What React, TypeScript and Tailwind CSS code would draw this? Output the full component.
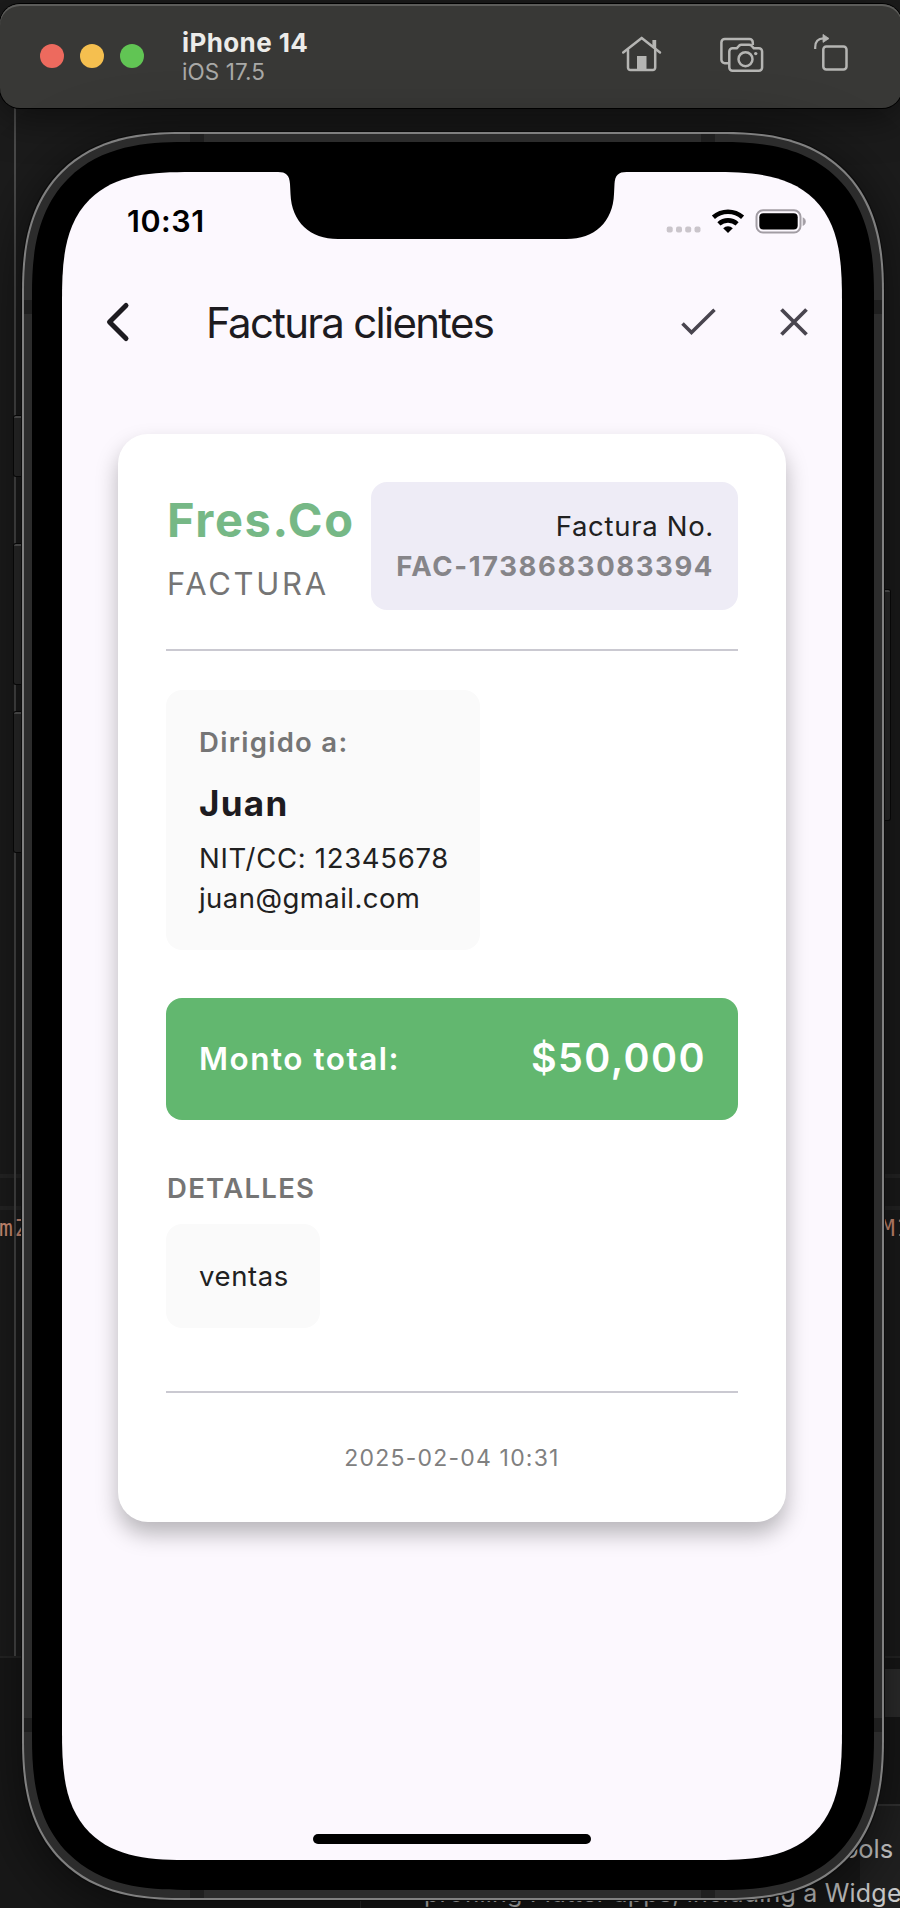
import type { ReactNode } from 'react';

function EditorBackdrop() {
  return (
    <div className="absolute inset-0 overflow-hidden bg-[#1c1c1c]" aria-hidden="true">
      <div className="absolute left-0 top-[1174px] h-1 w-full bg-[#262626]" />
      <div className="absolute left-0 top-[1206px] h-1 w-full bg-[#262626]" />
      <span className="absolute left-[-1px] top-[1212px] font-['DejaVu_Sans_Mono',monospace] text-[23px] leading-[32px] tracking-[1.8px] text-[#d8957a]">
        mZ
      </span>
      <span className="absolute left-[881px] top-[1212px] font-['DejaVu_Sans_Mono',monospace] text-[23px] leading-[32px] tracking-[1.4px] text-[#d8957a]">
        M1
      </span>
      <div className="absolute left-0 top-[1656px] h-[252px] w-full border-t-2 border-[#262626] bg-[#181818]" />
      <div className="absolute left-[870px] top-[1669px] h-12 w-[40px] bg-[#2e2e2e]" />
      <div className="absolute left-[860px] top-[1804px] h-[104px] w-[60px] border-t-2 border-[#333333] bg-[#202020]" />
      <div className="absolute left-[360px] top-[1890px] h-5 w-px bg-[#2c2c2c]" />
      <span className="absolute right-[7px] top-[1834px] text-[25.5px] leading-[30px] tracking-[-0.1px] text-[#cccccc]">
        tools
      </span>
      <span className="absolute left-[424px] top-[1878px] whitespace-nowrap text-[25px] leading-[30px] tracking-[0.2px] text-[#cccccc]">
        profiling Flutter apps, including a Widge
      </span>
    </div>
  );
}

function HomeIcon() {
  return (
    <svg width="42" height="44" viewBox="0 0 42 44" fill="none" stroke="#b5b5b3" strokeWidth="2.5" strokeLinecap="round" strokeLinejoin="round">
      <path d="M2.2 18.5 20.7 3.9 39 18.5" />
      <path d="M7 16v17.6a2.4 2.4 0 0 0 2.4 2.4h22.4a2.4 2.4 0 0 0 2.4-2.4V16" />
      <path d="M16 22h9.5v14H16z" fill="#b5b5b3" stroke="none" />
      <path d="M31.4 6h3.8v9l-3.8-3z" fill="#b5b5b3" stroke="none" />
    </svg>
  );
}

function ScreenshotIcon() {
  return (
    <svg width="46" height="44" viewBox="0 0 46 44" fill="none" stroke="#b5b5b3" strokeWidth="2.5" strokeLinejoin="round">
      <path d="M10 29.2H5.8A3.4 3.4 0 0 1 2.4 25.8V8.4A3.4 3.4 0 0 1 5.8 5H30.4a3.4 3.4 0 0 1 3.4 3.4V11" />
      <path d="M13.5 14.3h4.2l2.6-2.8q.8-.8 2-.8h8q1.200 0 2 .8l2.600 2.800h5a3.200 3.200 0 0 1 3.200 3.200v16a3.200 3.200 0 0 1-3.200 3.200H13.500a3.200 3.200 0 0 1-3.200-3.200v-16a3.200 3.200 0 0 1 3.200-3.200Z" />
      <circle cx="26.5" cy="25.2" r="7" />
      <circle cx="36.7" cy="19.6" r="1.7" fill="#b5b5b3" stroke="none" />
    </svg>
  );
}

function RotateIcon() {
  return (
    <svg width="38" height="44" viewBox="0 0 38 44" fill="none" stroke="#b5b5b3" strokeWidth="2.5">
      <rect x="11.3" y="12.5" width="23.2" height="23" rx="3" />
      <path d="M3.2 15v-1.8C3.2 7.5 6.2 4.6 11.5 4.4" strokeWidth="2.2" />
      <path d="M11 .4 17 4.500 11 8.400z" fill="#b5b5b3" strokeWidth="0.8" strokeLinejoin="round" />
    </svg>
  );
}

function TitleBar() {
  return (
    <header className="relative mt-1 flex h-[104px] w-[902px] shrink-0 items-center rounded-[20px] bg-[#383836] pl-10 pr-[52px] shadow-[0_0_0_1px_#000,inset_0_2px_0_#5c5c5a,0_8px_40px_rgba(0,0,0,0.5)]">
      <div className="flex gap-4">
        <span className="size-6 rounded-full bg-[#ed6a5e]" />
        <span className="size-6 rounded-full bg-[#f5bf4f]" />
        <span className="size-6 rounded-full bg-[#61c554]" />
      </div>
      <div className="ml-[38px] flex grow flex-col pt-[2px]">
        <span className="text-[26px] font-bold leading-[29px] tracking-[0.4px] text-[#ececea]">iPhone 14</span>
        <span className="text-[22.5px] leading-[29px] tracking-[0.1px] text-[#a9a9a7]">iOS 17.5</span>
      </div>
      <HomeIcon />
      <div className="ml-14">
        <ScreenshotIcon />
      </div>
      <div className="ml-[47px]">
        <RotateIcon />
      </div>
    </header>
  );
}

function SideButton({ className }: { className: string }) {
  return (
    <div
      className={`absolute border-t-2 border-t-[#5a5a5a] bg-[#2c2c2c] shadow-[0_0_0_1px_#0a0a0a] ${className}`}
    />
  );
}

function AntennaBands() {
  return (
    <>
      <div className="absolute left-[166px] top-0 h-2 w-3.5 bg-[#1f1f1f]" />
      <div className="absolute left-[677px] top-0 h-2 w-3.5 bg-[#1f1f1f]" />
      <div className="absolute bottom-0 left-[166px] h-2 w-3.5 bg-[#1f1f1f]" />
      <div className="absolute bottom-0 left-[677px] h-2 w-3.5 bg-[#1f1f1f]" />
      <div className="absolute left-0 top-[166px] h-3.5 w-2 bg-[#1f1f1f]" />
      <div className="absolute right-0 top-[166px] h-3.5 w-2 bg-[#1f1f1f]" />
      <div className="absolute bottom-[166px] left-0 h-3.5 w-2 bg-[#1f1f1f]" />
      <div className="absolute bottom-[166px] right-0 h-3.5 w-2 bg-[#1f1f1f]" />
    </>
  );
}

function Notch() {
  return (
    <svg className="absolute left-[216px] top-[-1px]" width="349" height="68" viewBox="0 -1 349 68" fill="#000">
      <path d="M0-1V0C8 0 11.5 3 12 12L12.500 22C13.500 50 32 67 60 67H288.500C316.500 67 335 50 336 22L336.500 12C337 3 340.500 0 348.500 0V-1Z" />
    </svg>
  );
}

function StatusBar() {
  return (
    <div className="flex h-[99px] items-center pl-[65px] pr-[35px]">
      <span className="grow text-[30.5px] font-semibold leading-none tracking-[0.5px] text-black">10:31</span>
      <svg width="36" height="26" viewBox="0 0 36 26" fill="#cac5cb">
        <rect x="0.7" y="17.5" width="6" height="6" rx="2" />
        <rect x="10" y="17.5" width="6" height="6" rx="2" />
        <rect x="19.2" y="17.5" width="6" height="6" rx="2" />
        <rect x="28.5" y="17.5" width="6" height="6" rx="2" />
      </svg>
      <svg className="ml-[9px]" width="34" height="26" viewBox="0 0 34 26" fill="none" stroke="#000" strokeWidth="4.6">
        <path d="M2.4 8.3A22 22 0 0 1 31.600 8.300" />
        <path d="M7.9 14.9A13.6 13.6 0 0 1 26.100 14.900" />
        <path d="M17 23.900 12.200 19.200A7 7 0 0 1 21.800 19.200Z" fill="#000" stroke="none" />
      </svg>
      <svg className="ml-[10px]" width="52" height="26" viewBox="0 0 52 26" fill="none">
        <rect x="1.5" y="1.3" width="44" height="22.2" rx="6.5" stroke="#a29da4" strokeWidth="2" />
        <rect x="4.3" y="4.2" width="38.4" height="16.4" rx="4" fill="#000" />
        <path d="M48.200 8.800a4.500 4.500 0 0 1 0 7.600z" fill="#a29da4" stroke="#a29da4" />
      </svg>
    </div>
  );
}

function AppBar() {
  return (
    <div className="flex h-[102px] items-center pl-[43px] pr-[33px]">
      <svg width="26" height="42" viewBox="0 0 26 42" fill="none" stroke="#1d1b20" strokeWidth="5" strokeLinecap="round" strokeLinejoin="round">
        <path d="M21 4.500 4.500 21 21 37.500" />
      </svg>
      <h1 className="ml-[75px] grow pt-[2px] text-[42px] font-normal leading-none tracking-[-1.73px] text-[#1d1b20]">
        Factura clientes
      </h1>
      <svg width="38" height="30" viewBox="0 0 38 30" fill="none" stroke="#49454f" strokeWidth="3.6">
        <path d="M2.500 16.500 11.500 25.500 34.500 2.800" />
      </svg>
      <svg className="ml-[61px]" width="30" height="30" viewBox="0 0 30 30" fill="none" stroke="#49454f" strokeWidth="3.8">
        <path d="M2.500 2.500 27.500 27.500M27.500 2.500 2.500 27.500" />
      </svg>
    </div>
  );
}

function SoftBox({ children, className = '' }: { children: ReactNode; className?: string }) {
  return <div className={`flex flex-col rounded-2xl bg-[#fafafa] py-8 pl-[33px] ${className}`}>{children}</div>;
}

function InvoiceCard() {
  return (
    <section className="mx-14 mt-[61px] flex flex-col rounded-[30px] bg-white p-12 shadow-[0_12px_22px_rgba(0,0,0,0.27)]">
      <div className="flex justify-between">
        <div className="pl-px pt-[10px]">
          <p className="text-[47px] font-bold leading-[56px] tracking-[1.65px] text-[#76b886]">Fres.Co</p>
          <p className="mt-4 text-[31px] leading-10 tracking-[2.7px] text-[#757575]">FACTURA</p>
        </div>
        <div className="flex w-[367px] flex-col whitespace-nowrap rounded-2xl bg-[#eeecf6] py-6 pr-6 text-right text-[27.5px] leading-10">
          <span className="tracking-[0.7px] text-[#212121]">Factura No.</span>
          <span className="font-bold tracking-[1.57px] text-[#868589]">FAC-1738683083394</span>
        </div>
      </div>

      <div className="mt-[39px] h-0.5 bg-[#cac9d1]" />

      <SoftBox className="mt-[39px] w-[314px]">
        <span className="text-[27.5px] font-semibold leading-10 tracking-[1.3px] text-[#757575]">Dirigido a:</span>
        <span className="mt-4 text-[35px] font-bold leading-[50px] tracking-[1.3px] text-[#1d1b20]">Juan</span>
        <span className="mt-2.5 whitespace-nowrap text-[27.5px] leading-10 tracking-[0.7px] text-[#212121]">NIT/CC: 12345678</span>
        <span className="text-[27.5px] leading-10 tracking-[0.45px] text-[#212121]">juan@gmail.com</span>
      </SoftBox>

      <div className="mt-12 flex h-[122px] items-center justify-between rounded-2xl bg-[#62b76f] pl-[33px] pr-8 font-semibold text-white">
        <span className="text-[31.5px] leading-[42px] tracking-[1.5px]">Monto total:</span>
        <span className="pb-[2px] text-[39.5px] leading-[48px] tracking-[1.4px]">$50,000</span>
      </div>

      <p className="mt-12 pl-px text-[27.5px] font-semibold leading-10 tracking-[1.3px] text-[#757575]">DETALLES</p>

      <SoftBox className="mt-4 w-[154px]">
        <span className="text-[27.5px] leading-10 tracking-[0.6px] text-[#212121]">ventas</span>
      </SoftBox>

      <div className="mt-[63px] h-0.5 bg-[#cac9d1]" />

      <p className="mb-[-1px] mt-[49px] text-center text-[23px] leading-[33px] tracking-[1.2px] text-[#808080]">2025-02-04 10:31</p>
    </section>
  );
}

function PhoneFrame({ children }: { children: ReactNode }) {
  return (
    <div className="relative ml-[22px] mt-6 w-[862px] shrink-0">
      <SideButton className="left-[-8px] top-[284px] h-[60px] w-2 rounded-l-[2px]" />
      <SideButton className="left-[-8px] top-[412px] h-[140px] w-2 rounded-l-[2px]" />
      <SideButton className="left-[-8px] top-[580px] h-[140px] w-2 rounded-l-[2px]" />
      <SideButton className="right-[-6px] top-[458px] h-[230px] w-1.5 rounded-r-[2px]" />
      <div className="relative rounded-[160px] border-2 border-[#808080] bg-[#2c2c2c] p-2 shadow-[0_0_0_1px_#0c0c0c,0_10px_60px_rgba(0,0,0,0.6)] [corner-shape:superellipse(1.31)]">
        <AntennaBands />
        <div className="relative rounded-[152px] bg-black pb-[30px] pl-[30px] pr-8 pt-[30px] [corner-shape:superellipse(1.34)]">
          <div className="relative flex h-[1688px] w-[780px] flex-col rounded-[130px] bg-[#fcf8fe] [corner-shape:superellipse(1.54)]">
            <Notch />
            {children}
            <div className="mx-auto mb-4 mt-auto h-2.5 w-[278px] rounded-full bg-black" />
          </div>
        </div>
      </div>
    </div>
  );
}

export default function App() {
  return (
    <main className="relative flex h-[1908px] w-[900px] flex-col overflow-hidden font-[Inter,'Liberation_Sans',sans-serif]">
      <EditorBackdrop />
      <div className="absolute left-[14px] top-[100px] h-[1556px] w-0.5 bg-[#4a4a4a]" />
      <TitleBar />
      <PhoneFrame>
        <StatusBar />
        <AppBar />
        <InvoiceCard />
      </PhoneFrame>
    </main>
  );
}
